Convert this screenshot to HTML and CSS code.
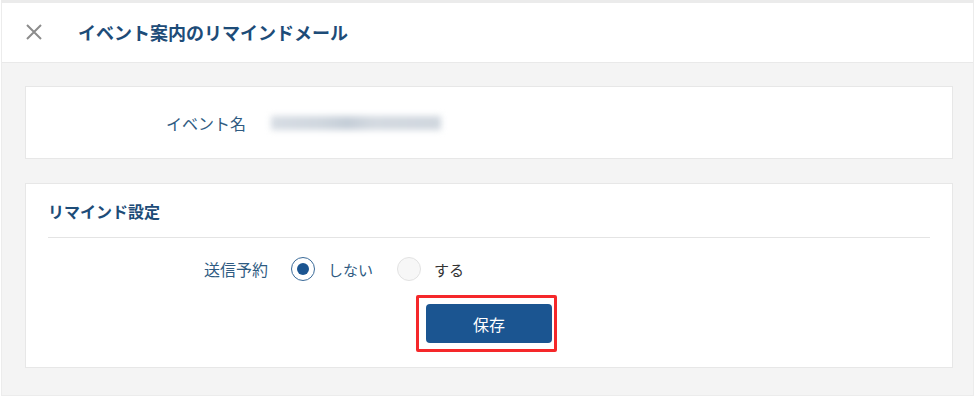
FILE: index.html
```html
<!DOCTYPE html>
<html lang="ja">
<head>
<meta charset="utf-8">
<link rel="stylesheet" href="styles.css">
</head>
<body>
<div class="frame">
  <header class="header">
    <svg class="close" width="18" height="18" viewBox="0 0 18 18" aria-hidden="true">
      <path d="M2 2 L16 16 M16 2 L2 16" stroke="#8c8c8c" stroke-width="2" fill="none"/>
    </svg>
    <h1 class="title">イベント案内のリマインドメール</h1>
  </header>
  <main class="main">
    <section class="card card-event">
      <div class="row">
        <div class="label">イベント名</div>
        <div class="value"><span class="blur"></span></div>
      </div>
    </section>
    <section class="card card-remind">
      <h2 class="section-title">リマインド設定</h2>
      <div class="divider"></div>
      <div class="row row-radio">
        <div class="label">送信予約</div>
        <div class="radios">
          <label class="radio checked"><span class="ring"><span class="dot"></span></span><span class="rtext">しない</span></label>
          <label class="radio"><span class="ring"></span><span class="rtext dark">する</span></label>
        </div>
      </div>
      <div class="actions">
        <div class="btn-wrap">
          <button class="btn">保存</button>
          <span class="highlight"></span>
        </div>
      </div>
    </section>
  </main>
</div>
</body>
</html>
```
FILE: styles.css
```css
* { box-sizing: border-box; }
html, body { margin: 0; padding: 0; background: #fff; }
body {
  font-family: "Noto Sans CJK JP", "Noto Sans", sans-serif;
  width: 977px;
  height: 398px;
  overflow: hidden;
}
.frame {
  margin: 0 4px 0 1px;
  width: 973px;
  height: 396px;
  border: 1px solid #ececec;
  border-top: 3px solid #ebebeb;
  background: #f4f4f4;
  display: flex;
  flex-direction: column;
}
.header {
  height: 60px;
  background: #fff;
  border-bottom: 1px solid #e9e9e9;
  display: flex;
  align-items: center;
  padding-left: 23px;
  padding-bottom: 2px;
  flex-shrink: 0;
}
.close { display: block; }
.title {
  margin: 0 0 0 35px;
  font-size: 18px;
  font-weight: 700;
  color: #1d4c78;
}
.main {
  padding: 23px 20px 0 23px;
  display: flex;
  flex-direction: column;
  gap: 24px;
}
.card {
  background: #fff;
  border: 1px solid #e7e7e7;
}
.card-event {
  height: 73px;
  display: flex;
  align-items: center;
}
.row {
  display: flex;
  align-items: center;
  gap: 25px;
}
.label {
  width: 220px;
  text-align: right;
  font-size: 16px;
  color: #2f5b82;
}
.blur {
  display: block;
  width: 170px;
  height: 14px;
  background: linear-gradient(90deg, #d6dce3 0%, #cfd6de 30%, #c4cdd7 45%, #d3d9e0 60%, #cfd6de 100%);
  filter: blur(3px);
}
.card-remind {
  height: 185px;
  padding: 0 22px 0 22px;
  display: flex;
  flex-direction: column;
}
.section-title {
  margin: 0;
  height: 53px;
  display: flex;
  align-items: center;
  font-size: 16px;
  font-weight: 700;
  color: #1d4c78;
}
.divider {
  height: 1px;
  background: #e4e4e4;
}
.row-radio {
  margin-top: 19px;
  gap: 23px;
}
.radios {
  display: flex;
  align-items: center;
  gap: 24px;
}
.radio {
  display: flex;
  align-items: center;
  gap: 13px;
  font-size: 15px;
}
.ring {
  width: 24px;
  height: 24px;
  border-radius: 50%;
  border: 1px solid #e2e2e2;
  background: #f7f7f7;
  display: flex;
  align-items: center;
  justify-content: center;
}
.radio.checked .ring {
  border: 1.5px solid #3a6a98;
  background: #fff;
}
.dot {
  width: 12px;
  height: 12px;
  border-radius: 50%;
  background: #1b5591;
}
.rtext { color: #2f5b82; }
.rtext.dark { color: #333; }
.actions {
  display: flex;
  justify-content: center;
  margin-top: 23px;
}
.btn-wrap { position: relative; }
.btn {
  display: block;
  width: 126px;
  height: 39px;
  border: none;
  border-radius: 4px;
  background: #1b5591;
  color: #fff;
  font-family: inherit;
  font-size: 16px;
}
.highlight {
  position: absolute;
  left: -10px;
  top: -9px;
  right: -5px;
  bottom: -9px;
  border: 3px solid #f5282a;
  border-radius: 2px;
}
```
